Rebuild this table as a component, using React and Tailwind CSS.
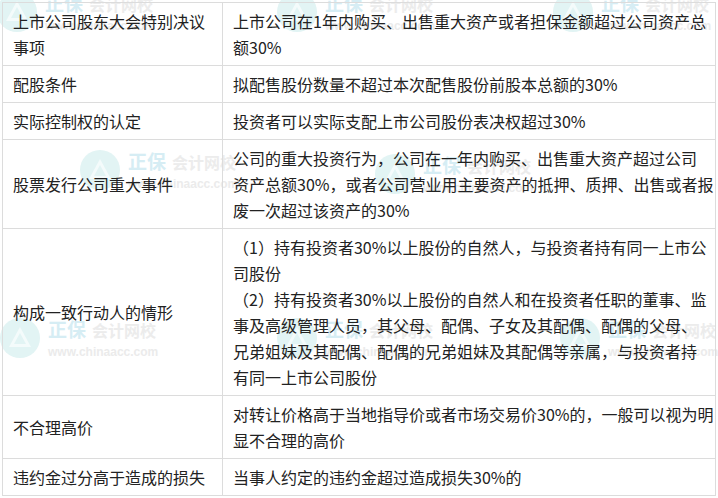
import React from "react";

const rows = [
  {
    left: ["上市公司股东大会特别决议", "事项"],
    right: ["上市公司在1年内购买、出售重大资产或者担保金额超过公司资产总", "额30%"],
  },
  { left: ["配股条件"], right: ["拟配售股份数量不超过本次配售股份前股本总额的30%"] },
  { left: ["实际控制权的认定"], right: ["投资者可以实际支配上市公司股份表决权超过30%"] },
  {
    left: ["股票发行公司重大事件"],
    right: [
      "公司的重大投资行为，公司在一年内购买、出售重大资产超过公司",
      "资产总额30%，或者公司营业用主要资产的抵押、质押、出售或者报",
      "废一次超过该资产的30%",
    ],
  },
  {
    left: ["构成一致行动人的情形"],
    right: [
      "（1）持有投资者30%以上股份的自然人，与投资者持有同一上市公",
      "司股份",
      "（2）持有投资者30%以上股份的自然人和在投资者任职的董事、监",
      "事及高级管理人员，其父母、配偶、子女及其配偶、配偶的父母、",
      "兄弟姐妹及其配偶、配偶的兄弟姐妹及其配偶等亲属，与投资者持",
      "有同一上市公司股份",
    ],
  },
  {
    left: ["不合理高价"],
    right: ["对转让价格高于当地指导价或者市场交易价30%的，一般可以视为明", "显不合理的高价"],
  },
  { left: ["违约金过分高于造成的损失"], right: ["当事人约定的违约金超过造成损失30%的"] },
];

function Watermark({ x, y }) {
  return (
    <div className="absolute flex" style={{ left: x, top: y }}>
      <svg width="40" height="40" viewBox="0 0 40 40" className="shrink-0">
        <circle cx="20" cy="20" r="20" fill="#e2f4f4" />
        <path d="M20 9 L31 29 L9 29 Z" fill="#f4fbfb" />
        <path d="M20 15 L26 26 L14 26 Z" fill="#e2f4f4" />
      </svg>
      <div className="ml-[8px] flex flex-col">
        <div className="flex items-end h-[22px]">
          <span className="text-[19px] leading-[22px] font-bold text-[#d6edf4] tracking-[0px]">正保</span>
          <span className="ml-[6px] text-[16px] leading-[20px] font-bold text-[#ececec]">会计网校</span>
        </div>
        <div
          className="mt-[6px] text-[12px] leading-[12px] font-bold text-[#ebebeb]"
          style={{ fontFamily: '"Liberation Sans", Arial, sans-serif' }}
        >
          www.chinaacc.com
        </div>
      </div>
    </div>
  );
}

export default function App() {
  return (
    <div
      className="relative w-[718px] h-[498px] bg-white overflow-hidden text-[#222]"
      style={{ fontFamily: '"Noto Sans CJK SC", "Noto Sans", sans-serif' }}
    >
      <div className="absolute inset-0">
        <Watermark x={-3} y={-8} />
        <Watermark x={277} y={-8} />
        <Watermark x={553} y={-8} />
        <Watermark x={80} y={150} />
        <Watermark x={375} y={154} />
        <Watermark x={0} y={318} />
        <Watermark x={277} y={318} />
        <Watermark x={560} y={318} />
      </div>
      <div className="relative ml-[2px] pt-[2px]">
        <div className="grid grid-cols-[220px_493px] border-t border-l border-[#dcdcdc] w-[714px]">
          {rows.map((r, i) => (
            <React.Fragment key={i}>
              <div className="flex flex-col justify-center border-r border-b border-[#dcdcdc] pl-[10px] py-[5px] text-[16px] leading-[26px]">
                {r.left.map((t, j) => (
                  <div key={j} className="whitespace-nowrap">{t}</div>
                ))}
              </div>
              <div className="border-r border-b border-[#dcdcdc] pl-[10px] py-[5px] text-[16px] leading-[26px]">
                {r.right.map((t, j) => (
                  <div key={j} className="whitespace-nowrap">{t}</div>
                ))}
              </div>
            </React.Fragment>
          ))}
        </div>
      </div>
    </div>
  );
}
